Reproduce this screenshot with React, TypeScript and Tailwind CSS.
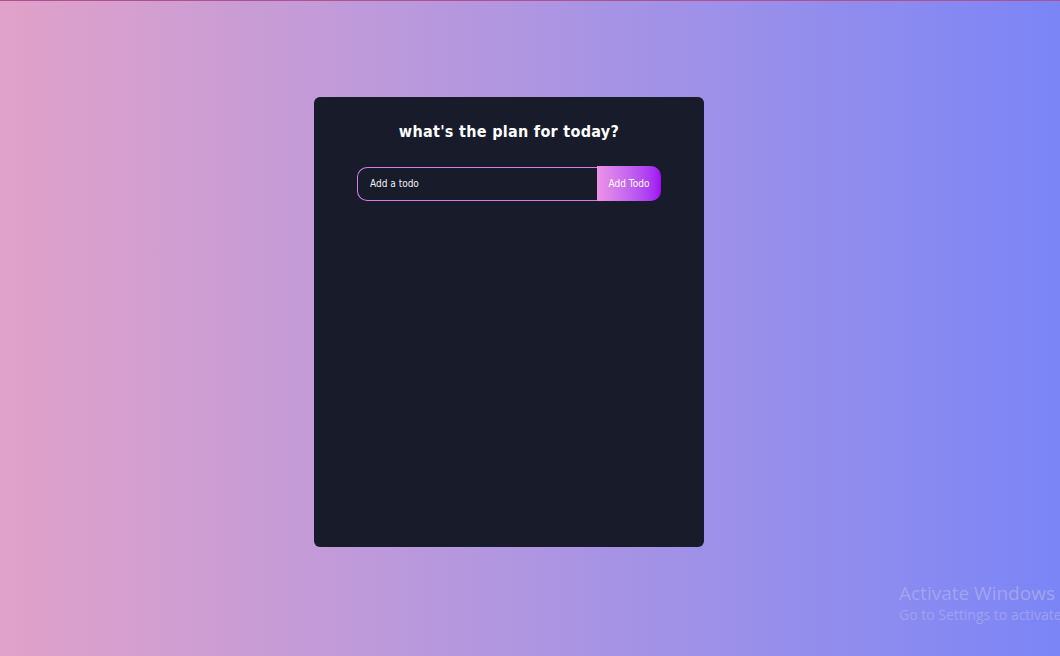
const App = () => {
    return (
        <div className="relative min-h-screen h-[656px] w-full overflow-hidden border-t border-[#b0508f] bg-gradient-to-r from-[#e1a1c9] to-[#7b85f6] font-['DejaVu_Sans_Condensed','DejaVu_Sans',sans-serif]">
            {/* Todo card */}
            <div className="flex justify-center pt-[96px] pr-[42px]">
                <div className="w-[390px] h-[450px] rounded-md bg-[#181b2a] flex flex-col items-center">
                    <h1 className="mt-[23px] text-[16px] font-bold text-white tracking-[0.3px]">
                        what's the plan for today?
                    </h1>

                    {/* Form */}
                    <form className="mt-[22px] flex items-center" onSubmit={(e) => e.preventDefault()}>
                        <input
                            placeholder="Add a todo"
                            className="w-[240px] h-[34px] rounded-l-[10px] border border-[#d67ee8] border-r-0 bg-transparent pl-[12px] text-[10px] text-white placeholder:text-[#f2f2f6] outline-none"
                        />
                        <button
                            type="submit"
                            className="w-[64px] h-[35px] rounded-r-[10px] bg-gradient-to-r from-[#ec94e6] to-[#a008f2] text-[10px] text-white"
                        >
                            Add Todo
                        </button>
                    </form>
                </div>
            </div>

            {/* Windows watermark */}
            <div className="absolute left-[899px] right-0 top-[580px] overflow-hidden whitespace-nowrap font-['Open_Sans',sans-serif] pointer-events-none">
                <div className="text-[19px] leading-[24px] text-[#a2a4ee]">Activate Windows</div>
                <div className="text-[14px] leading-[20px] text-[#9ea1ee]">Go to Settings to activate</div>
            </div>
        </div>
    );
};

export default App;
